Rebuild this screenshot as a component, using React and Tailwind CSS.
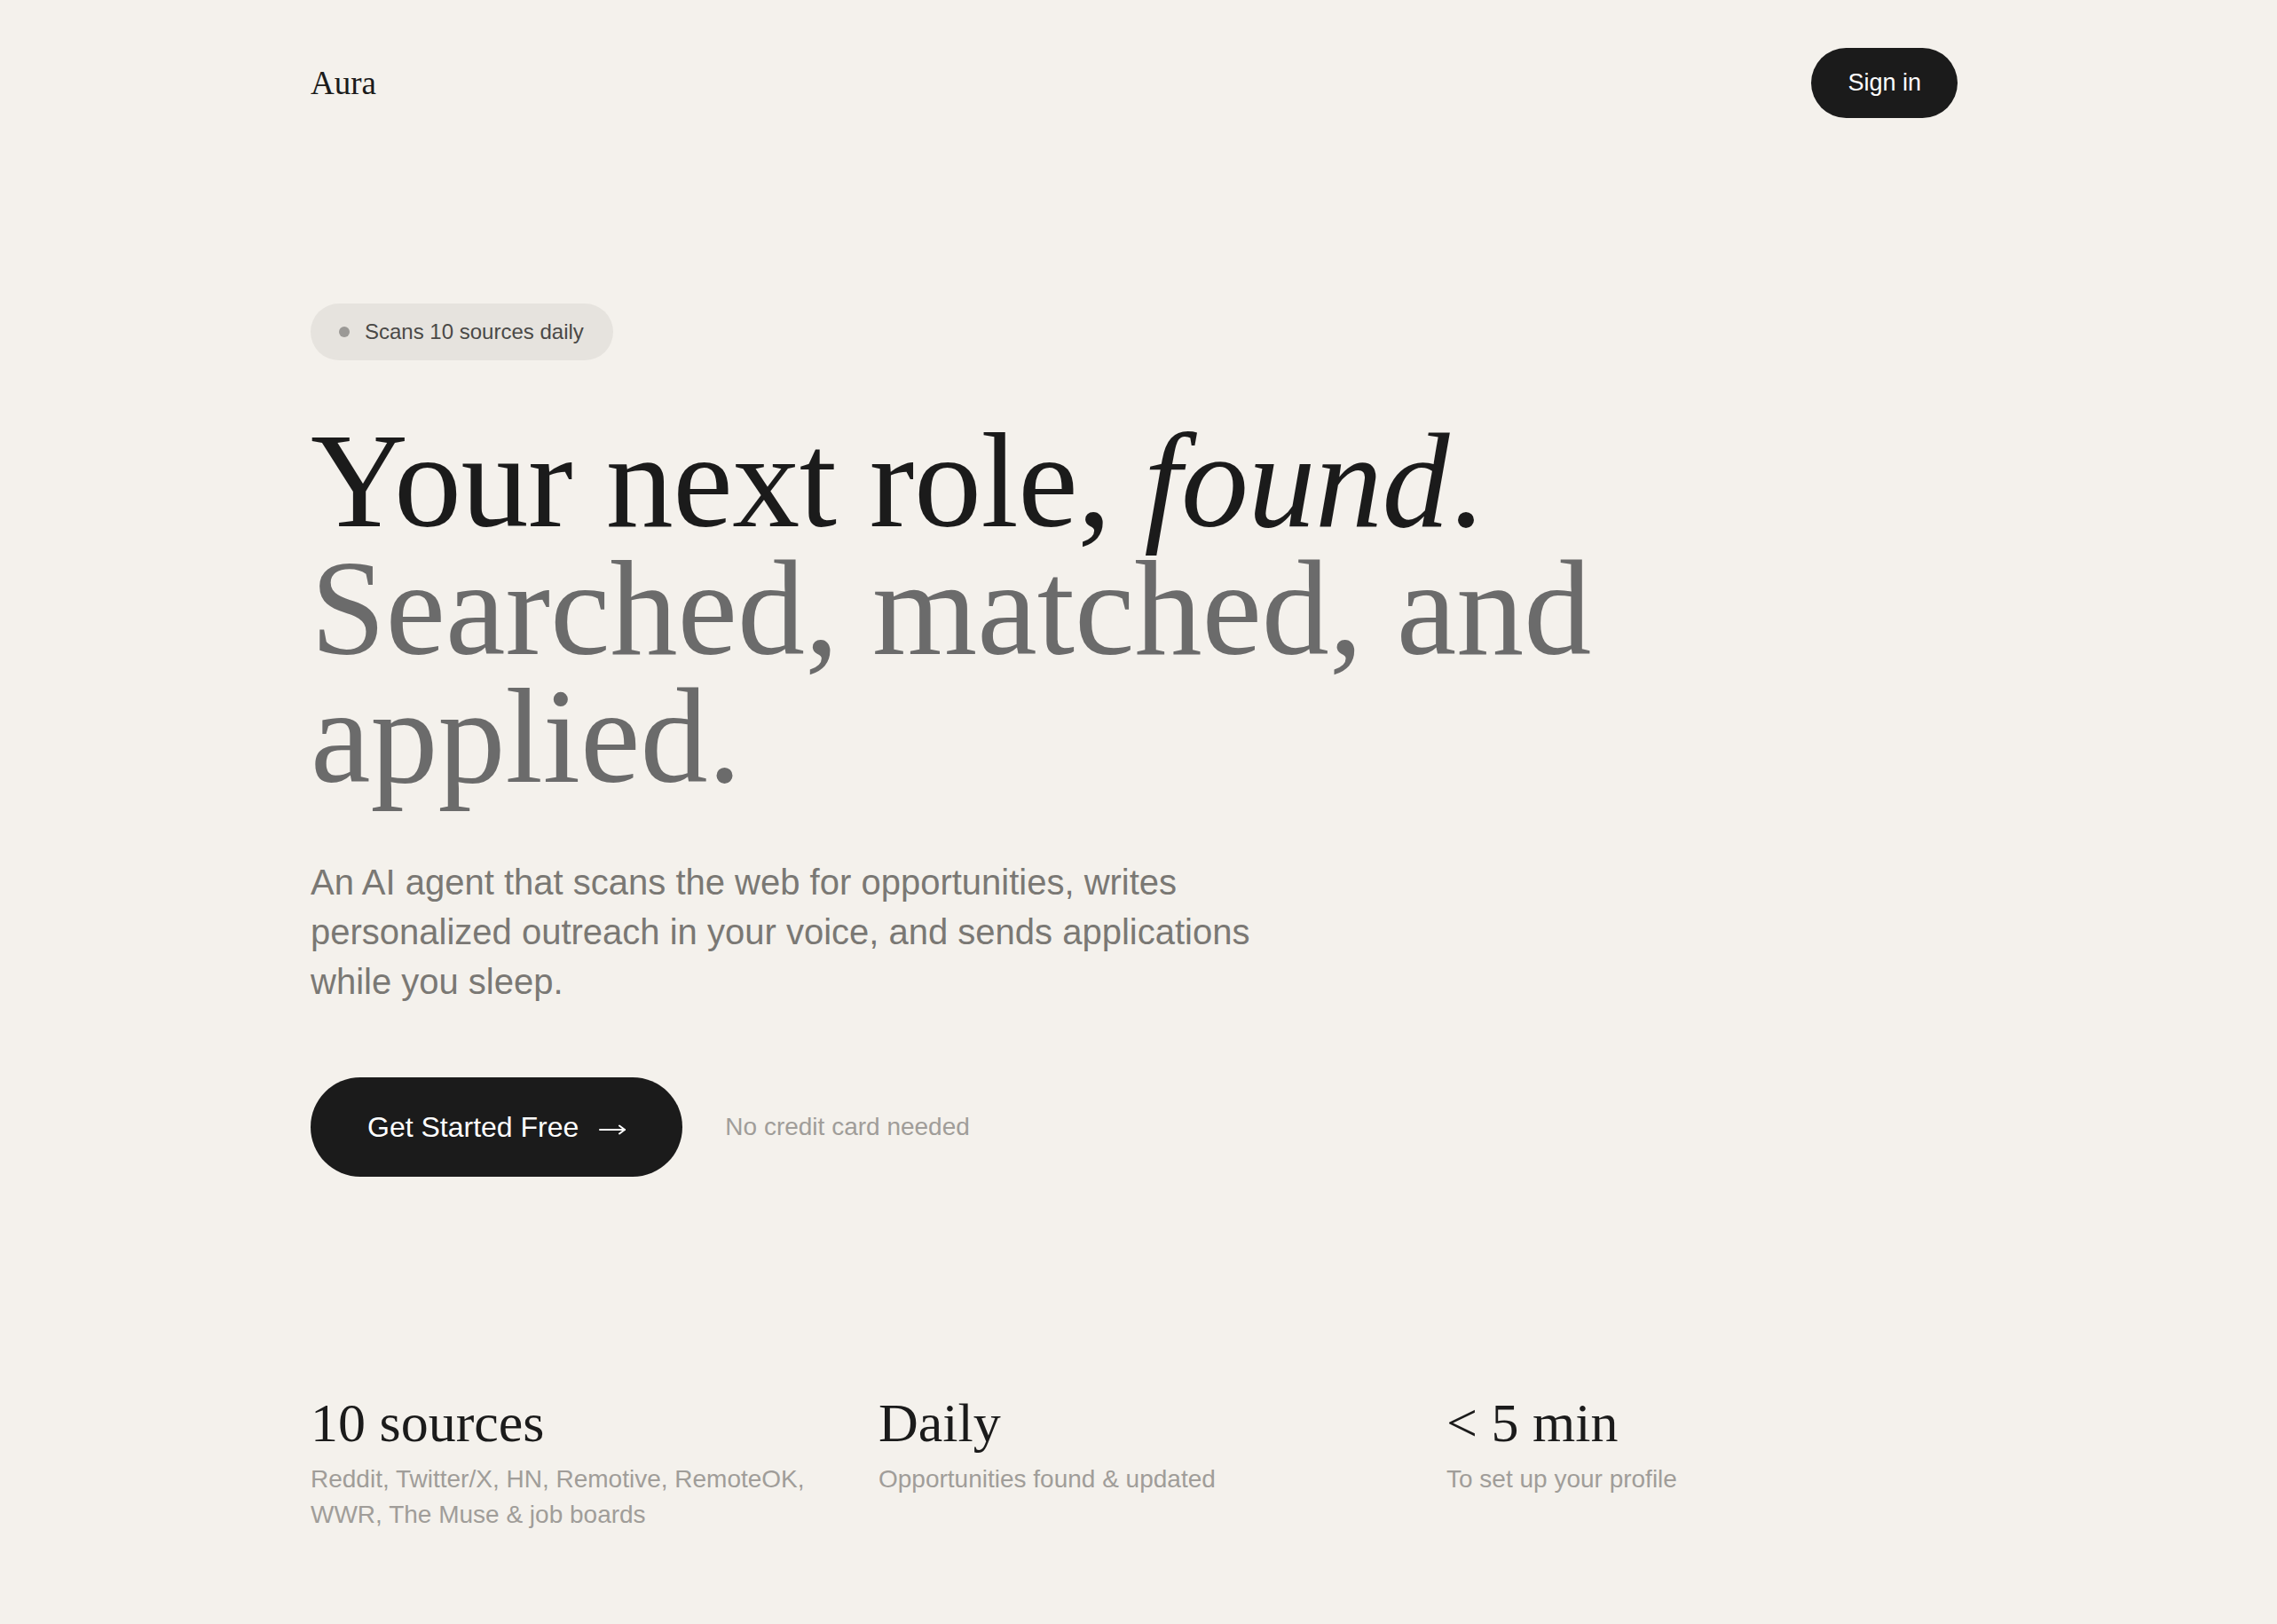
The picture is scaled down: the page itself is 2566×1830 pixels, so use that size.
const stats = [
    { title: "10 sources", desc: "Reddit, Twitter/X, HN, Remotive, RemoteOK, WWR, The Muse & job boards" },
    { title: "Daily", desc: "Opportunities found & updated" },
    { title: "< 5 min", desc: "To set up your profile" },
];

const serif = "font-['Liberation_Serif',Georgia,serif]";
const sans = "font-['Liberation_Sans',Arial,sans-serif]";

const ArrowRight = () => (
    <svg width="30" height="12" viewBox="0 0 30 12" fill="none" stroke="currentColor" strokeWidth="2" strokeLinecap="round" className="mt-[6px]">
        <path d="M1 6H29" />
        <path d="M23 1.5L29 6L23 10.5" strokeLinejoin="round" />
    </svg>
);

const App = () => {
    return (
        <div className={`min-h-screen bg-[#f4f1ec] text-[#1b1b1b] ${sans}`}>
            <div className="pl-[350px] pr-[360px]">
                <header className="flex items-center justify-between pt-[54px]">
                    <span className={`${serif} text-[37px] leading-none text-[#1b1b1b]`}>Aura</span>
                    <button className="h-[79px] px-[41px] rounded-full bg-[#1b1b1b] text-white text-[27px]">
                        Sign in
                    </button>
                </header>

                <section className="pt-[209px]">
                    <div className="inline-flex items-center h-[64px] pl-[32px] pr-[33px] gap-[17px] rounded-full bg-[#e6e3de]">
                        <span className="w-[12px] h-[12px] rounded-full bg-[#9b9996]"></span>
                        <span className="text-[24px] text-[#4a4947]">Scans 10 sources daily</span>
                    </div>

                    <h1 className={`${serif} mt-[64px] text-[152px] leading-[144px]`}>
                        <span className="block text-[#1b1b1b] tracking-[-0.5px]">
                            Your next role, <em className="italic">found</em>.
                        </span>
                        <span className="block text-[#6b6b6b]">Searched, matched, and applied.</span>
                    </h1>

                    <p className="mt-[64px] max-w-[1120px] text-[40px] leading-[56px] text-[#7a7874]">
                        An AI agent that scans the web for opportunities, writes personalized outreach in your voice, and sends applications while you sleep.
                    </p>

                    <div className="mt-[80px] flex items-center gap-[48px]">
                        <button className="h-[112px] pl-[64px] pr-[64px] rounded-full bg-[#1b1b1b] text-white text-[32px] flex items-center gap-[23px]">
                            <span>Get Started Free</span>
                            <ArrowRight />
                        </button>
                        <span className="text-[28px] text-[#a09d99]">No credit card needed</span>
                    </div>
                </section>

                <section className="mt-[243px] grid grid-cols-3 gap-16 pb-[100px]">
                    {stats.map((eachStat) => (
                        <div key={eachStat.title}>
                            <div className={`${serif} text-[62px] leading-[68px] text-[#1b1b1b]`}>{eachStat.title}</div>
                            <div className="mt-[10px] text-[28px] leading-[40px] text-[#a09d99]">{eachStat.desc}</div>
                        </div>
                    ))}
                </section>
            </div>
        </div>
    );
};

export default App;
